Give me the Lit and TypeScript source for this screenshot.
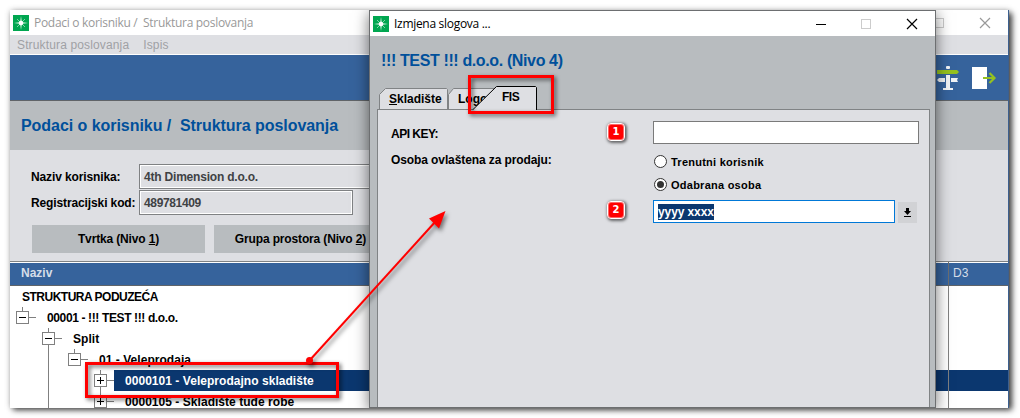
import { LitElement, html, svg, css } from 'lit';
import { customElement, property } from 'lit/decorators.js';
import { classMap } from 'lit/directives/class-map.js';

interface TreeNode {
  depth: number;
  text: string;
  state: 'none' | 'open' | 'closed';
  selected?: boolean;
}

const NODES: TreeNode[] = [
  { depth: 0, text: 'STRUKTURA PODUZEĆA', state: 'none' },
  { depth: 1, text: '00001 - !!! TEST !!! d.o.o.', state: 'open' },
  { depth: 2, text: 'Split', state: 'open' },
  { depth: 3, text: '01 - Veleprodaja', state: 'open' },
  { depth: 4, text: '0000101 - Veleprodajno skladište', state: 'closed', selected: true },
  { depth: 4, text: '0000105 - Skladište tuđe robe', state: 'closed' },
];

@customElement('app-logo')
export class AppLogo extends LitElement {
  static styles = css`
    :host {
      display: block;
      width: 16px;
      height: 16px;
    }
    svg {
      display: block;
    }
  `;

  render() {
    return html`
      <svg width="16" height="16" viewBox="0 0 16 16">
        <rect width="16" height="16" fill="#00a650" />
        <path d="M4 4L12 12M12 4L4 12" fill="none" stroke="#8fd8ae" stroke-width="0.9" />
        <path d="M8 1L9 7L15 8L9 9L8 15L7 9L1 8L7 7Z" fill="#b9e8cc" />
        <circle cx="8" cy="8" r="2.2" fill="#fff" />
      </svg>
    `;
  }
}

@customElement('title-bar')
export class TitleBar extends LitElement {
  @property() caption = '';
  @property({ type: Boolean, reflect: true }) inactive = false;

  static styles = css`
    :host {
      display: flex;
      align-items: center;
      height: 25px;
      background: #fff;
      color: #000;
      font: 12px/16px 'Open Sans', sans-serif;
      box-sizing: border-box;
      padding-left: 3px;
    }
    :host([inactive]) {
      color: #999;
    }
    .caption {
      flex: 1;
      margin-left: 5px;
      white-space: pre;
      letter-spacing: -0.3px;
    }
    .buttons {
      display: flex;
      gap: 36px;
      margin-right: 18px;
    }
    svg {
      display: block;
      overflow: visible;
    }
  `;

  render() {
    return html`
      <app-logo></app-logo>
      <span class="caption">${this.caption}</span>
      <div class="buttons">
        <svg width="10" height="10" fill="currentColor"><rect x="1" y="5" width="10" height="1" /></svg>
        <svg width="10" height="10" fill="none" stroke="#ccc"><rect x="0.5" y="0.5" width="9" height="9" /></svg>
        <svg width="10" height="10" stroke="currentColor" stroke-width="1.2"><path d="M0 0L10 10M10 0L0 10" /></svg>
      </div>
    `;
  }
}

@customElement('structure-tree')
export class StructureTree extends LitElement {
  static styles = css`
    :host {
      display: block;
      background: #fff;
      font: bold 12px/23px 'Liberation Sans', Arial, sans-serif;
    }
    .row {
      display: flex;
      height: 21px;
      white-space: pre;
      color: #000;
      letter-spacing: 0.04px;
    }
    .lines {
      flex: none;
      display: block;
      shape-rendering: crispEdges;
    }
    .text {
      flex: 1;
      padding-left: 11px;
    }
    .root .text {
      padding-left: 12px;
      letter-spacing: -0.5px;
    }
    .company .text {
      letter-spacing: -0.37px;
    }
    .selected .text {
      background: #0b376f;
      color: #fff;
    }
  `;

  renderLines(node: TreeNode) {
    if (node.state === 'none') return '';
    const width = node.depth * 26;
    const x = width - 13.5;
    return html`
      <svg class="lines" width=${width} height="21" fill="none" stroke="#808080">
        <path d="M${x} 0V4M${x + 6} 10.5H${width - 0.5}" />
        ${node.depth > 2 ? svg`<path d="M38.5 0V21" />` : ''}
        ${node.depth === 2 || node.state === 'closed' ? svg`<path d="M${x} 17V21" />` : ''}
        <rect x=${x - 6} y="4.5" width="12" height="12" fill="#fff" />
        <path d="M${x - 3.5} 10.5H${x + 3.5}" stroke="#000" />
        ${node.state === 'closed' ? svg`<path d="M${x} 7V14" stroke="#000" />` : ''}
      </svg>
    `;
  }

  render() {
    return NODES.map(
      (node) => html`
        <div
          class=${classMap({
            row: true,
            root: node.depth === 0,
            company: node.depth === 1,
            selected: !!node.selected,
          })}
        >
          ${this.renderLines(node)}
          <span class="text">${node.text}</span>
        </div>
      `
    );
  }
}

@customElement('edit-dialog')
export class EditDialog extends LitElement {
  static styles = css`
    :host {
      display: flex;
      flex-direction: column;
      box-sizing: border-box;
      border: 1px solid #6d6f71;
      background: #b8bcbf;
      font: bold 12px/16px 'Liberation Sans', Arial, sans-serif;
      color: #000;
      box-shadow: 0 3px 14px rgba(0, 0, 0, 0.55);
    }
    h2 {
      margin: 0;
      height: 50px;
      padding: 15px 0 0 11px;
      box-sizing: border-box;
      font-size: 16px;
      line-height: 20px;
      letter-spacing: -0.37px;
      color: #00509b;
    }
    .tabs {
      display: flex;
      height: 24px;
      padding-left: 8px;
    }
    .tab {
      flex: none;
      display: grid;
      height: 24px;
    }
    .tab > * {
      grid-area: 1 / 1;
    }
    .tab svg {
      display: block;
    }
    .tab span {
      padding: 5px 0 0 11px;
      position: relative;
    }
    .tab.logo span {
      padding-left: 10px;
    }
    .tab.active {
      margin-left: -48px;
      position: relative;
    }
    .tab.active span {
      padding: 3px 0 0 30px;
      letter-spacing: -0.5px;
    }
    .panel {
      flex: 1;
      margin: -1px 5px 0 7px;
      border: 1px solid #808385;
      border-bottom: 0;
      background: #dedfe3;
      padding: 11px 9px 0 13px;
    }
    .field {
      display: flex;
      height: 23px;
      align-items: center;
    }
    .name {
      width: 216px;
      letter-spacing: -0.1px;
    }
    .name.key {
      letter-spacing: -0.5px;
      padding-top: 2px;
    }
    .badge {
      width: 18px;
      height: 18px;
      box-sizing: border-box;
      border: 1px solid #fff;
      border-radius: 4px;
      background: #f00;
      box-shadow: inset 0 0 0 1px #ff6464, 1px 1px 3px 1px rgba(0, 0, 0, 0.55);
      color: #fff;
      font: bold 10px/16px 'DejaVu Sans', sans-serif;
      text-align: center;
      margin: -2px 28px 0 0;
    }
    .badge.offset {
      margin: -4px 28px 0 216px;
    }
    .input {
      box-sizing: border-box;
      width: 266px;
      height: 23px;
      border: 1px solid #7a7a7a;
      background: #fff;
      padding: 3px 4px;
    }
    .input.focus {
      width: 242px;
      border-color: #0078d7;
    }
    .marked {
      display: inline-block;
      height: 16px;
      background: #0b376f;
      color: #fff;
      letter-spacing: -0.1px;
    }
    .drop {
      align-self: flex-end;
      display: block;
      width: 19px;
      height: 21px;
      margin-left: 3px;
      background: #d1d2d5;
    }
    .choice {
      display: flex;
      align-items: center;
      height: 23px;
      gap: 4px;
      font-size: 11px;
      letter-spacing: 0.25px;
    }
    .person {
      display: flex;
      margin: 6px 0 4px;
    }
    .person .name {
      width: 263px;
      padding-top: 2px;
    }
    .choice svg {
      display: block;
    }
  `;

  renderRadio(label: string, checked: boolean) {
    return html`
      <div class="choice">
        <svg width="13" height="13">
          <circle cx="6.5" cy="6.5" r="6" fill="#fff" stroke="#333" />
          ${checked ? svg`<circle cx="6.5" cy="6.5" r="3.5" fill="#333" />` : ''}
        </svg>
        <span>${label}</span>
      </div>
    `;
  }

  render() {
    return html`
      <title-bar caption="Izmjena slogova ..."></title-bar>
      <h2>!!! TEST !!! d.o.o. (Nivo 4)</h2>
      <div class="tabs">
        <div class="tab">
          <svg width="70" height="24" fill="#dedfe3" stroke="#808385">
            <path d="M1.5 24V8.5L7.5 2.5H68.5L69.5 3.5V24" />
          </svg>
          <span><u>S</u>kladište</span>
        </div>
        <div class="tab logo">
          <svg width="72" height="24" fill="#dedfe3" stroke="#808385">
            <path d="M0.5 24V8.5L5.5 2.5H70.5V24" />
          </svg>
          <span>Logo</span>
        </div>
        <div class="tab active">
          <svg width="66" height="24">
            <path d="M0.5 24L24.5 0.5H63.5L64.5 1.5V24Z" fill="#dedfe3" />
            <path d="M0.5 24L24.5 0.5H63.5L64.5 1.5V24" fill="none" stroke="#000" />
          </svg>
          <span>FIS</span>
        </div>
      </div>
      <div class="panel">
        <div class="field">
          <span class="name key">API KEY:</span>
          <span class="badge">1</span>
          <div class="input"></div>
        </div>
        <div class="person">
          <span class="name">Osoba ovlaštena za prodaju:</span>
          <div>
            ${this.renderRadio('Trenutni korisnik', false)}
            ${this.renderRadio('Odabrana osoba', true)}
          </div>
        </div>
        <div class="field">
          <span class="badge offset">2</span>
          <div class="input focus"><span class="marked">yyyy xxxx</span></div>
          <svg class="drop" viewBox="0 0 19 21">
            <path d="M8 6H11V9H13L9.5 13L6 9H8ZM6 14H13V15H6Z" />
          </svg>
        </div>
      </div>
    `;
  }
}

@customElement('app-root')
export class AppRoot extends LitElement {
  static styles = css`
    :host {
      display: block;
      position: relative;
      width: 1020px;
      height: 418px;
      padding: 10px 11px 10px 10px;
      box-sizing: border-box;
      background: #fff;
      overflow: hidden;
      font: bold 12px/16px 'Liberation Sans', Arial, sans-serif;
      color: #000;
    }
    .window {
      position: relative;
      isolation: isolate;
      height: 398px;
      width: 999px;
      box-sizing: border-box;
      border-right: 1px solid #3c5f8e;
      background: #dedfe3;
      overflow: hidden;
    }
    .shadow {
      width: 999px;
      height: 397px;
      box-shadow: 0 0 6px rgba(0, 0, 0, 0.18), 3px 3px 6px rgba(0, 0, 0, 0.75);
    }
    .menu {
      display: flex;
      gap: 14px;
      height: 19px;
      padding-left: 7px;
      border-bottom: 1px solid #fff;
      font-weight: normal;
      line-height: 20px;
      color: #a0a1a5;
      letter-spacing: 0.14px;
    }
    .toolbar {
      display: flex;
      justify-content: flex-end;
      align-items: center;
      gap: 12px;
      height: 45px;
      padding-right: 10px;
      background: #36639c;
      border-bottom: 1px solid #606468;
    }
    h1 {
      margin: 0;
      height: 49px;
      padding-left: 11px;
      background: #b8bcbf;
      color: #00509b;
      font-size: 16px;
      line-height: 49px;
      letter-spacing: -0.05px;
      white-space: pre;
    }
    .form {
      height: 111px;
      box-sizing: border-box;
      padding: 14px 0 0 21px;
    }
    .field {
      display: flex;
      align-items: center;
      height: 25px;
      margin-bottom: 1px;
    }
    .name {
      width: 108px;
      white-space: nowrap;
      letter-spacing: -0.12px;
    }
    .value {
      box-sizing: border-box;
      width: 400px;
      height: 25px;
      border: 1px solid #7f8183;
      box-shadow: inset 0 0 0 1px #fff;
      padding: 4px;
      color: #404245;
      letter-spacing: -0.2px;
    }
    .value.short {
      width: 214px;
      letter-spacing: -0.35px;
    }
    .levels {
      display: flex;
      gap: 9px;
      margin: 10px 0 0 1px;
    }
    .level {
      width: 173px;
      height: 28px;
      line-height: 29px;
      background: #b8bcbf;
      text-align: center;
      letter-spacing: -0.15px;
    }
    .columns {
      display: flex;
      height: 23px;
      border-top: 1px solid #808385;
      border-bottom: 1px solid #606468;
      box-shadow: inset 0 1px #fff;
      background: #36639c;
      color: #d5dde8;
      line-height: 20px;
    }
    .columns span {
      padding: 1px 0 0 11px;
      width: 927px;
    }
    .columns .last {
      width: auto;
      flex: 1;
      padding-left: 4px;
      border-left: 1px solid #6d6f71;
      font-weight: normal;
    }
    .grid {
      display: grid;
    }
    .grid > * {
      grid-area: 1 / 1;
    }
    .rule {
      margin-left: 938px;
      width: 1px;
      background: #808080;
      z-index: 1;
    }
    .dialog {
      position: absolute;
      left: 359px;
      top: 0;
      width: 567px;
      height: 398px;
      z-index: 2;
    }
    .marker {
      position: absolute;
      box-sizing: border-box;
      border: 3px solid #f00;
      filter: drop-shadow(2px 2px 2px rgba(0, 0, 0, 0.6));
    }
    .marker.tab {
      left: 468px;
      top: 75px;
      width: 86px;
      height: 39px;
    }
    .marker.node {
      left: 85px;
      top: 362px;
      width: 254px;
      height: 36px;
    }
    .arrow {
      position: absolute;
      left: 300px;
      top: 200px;
      filter: drop-shadow(2px 3px 2px rgba(0, 0, 0, 0.5));
    }
  `;

  render() {
    return html`
      <div class="shadow">
        <div class="window">
          <title-bar inactive caption="Podaci o korisniku /  Struktura poslovanja"></title-bar>
          <div class="menu"><span>Struktura poslovanja</span><span>Ispis</span></div>
          <div class="toolbar">
            <svg width="24" height="24" fill="#f1f3f5">
              <rect x="10" y="0" width="4" height="3" rx="1" />
              <path d="M1 4H21L23 6L21 8H1Z" fill="#95c11f" />
              <path d="M10 9H14V22H17V24H7V22H10ZM9 12V16H3L1 14L3 12ZM15 12H22L21 14L22 16H15Z" />
            </svg>
            <svg width="26" height="24">
              <rect y="1" width="15" height="22" fill="#fff" />
              <path d="M11 12H22M17.5 7L22.5 12L17.5 17" fill="none" stroke="#95c11f" stroke-width="2.2" />
            </svg>
          </div>
          <h1>Podaci o korisniku /  Struktura poslovanja</h1>
          <div class="form">
            <div class="field">
              <span class="name">Naziv korisnika:</span>
              <div class="value">4th Dimension d.o.o.</div>
            </div>
            <div class="field">
              <span class="name">Registracijski kod:</span>
              <div class="value short">489781409</div>
            </div>
            <div class="levels">
              <div class="level">Tvrtka (Nivo <u>1</u>)</div>
              <div class="level">Grupa prostora (Nivo <u>2</u>)</div>
            </div>
          </div>
          <div class="columns"><span>Naziv</span><span class="last">D3</span></div>
          <div class="grid">
            <structure-tree></structure-tree>
            <div class="rule"></div>
          </div>
          <edit-dialog class="dialog"></edit-dialog>
        </div>
      </div>
      <div class="marker tab"></div>
      <div class="marker node"></div>
      <svg class="arrow" width="160" height="170" fill="#f00">
        <circle cx="9.5" cy="160.5" r="3.5" />
        <path d="M9.5 160.5L136 21" stroke="#f00" stroke-width="2" />
        <path d="M145.5 11L129 18.5L139 28.5Z" />
      </svg>
    `;
  }
}
